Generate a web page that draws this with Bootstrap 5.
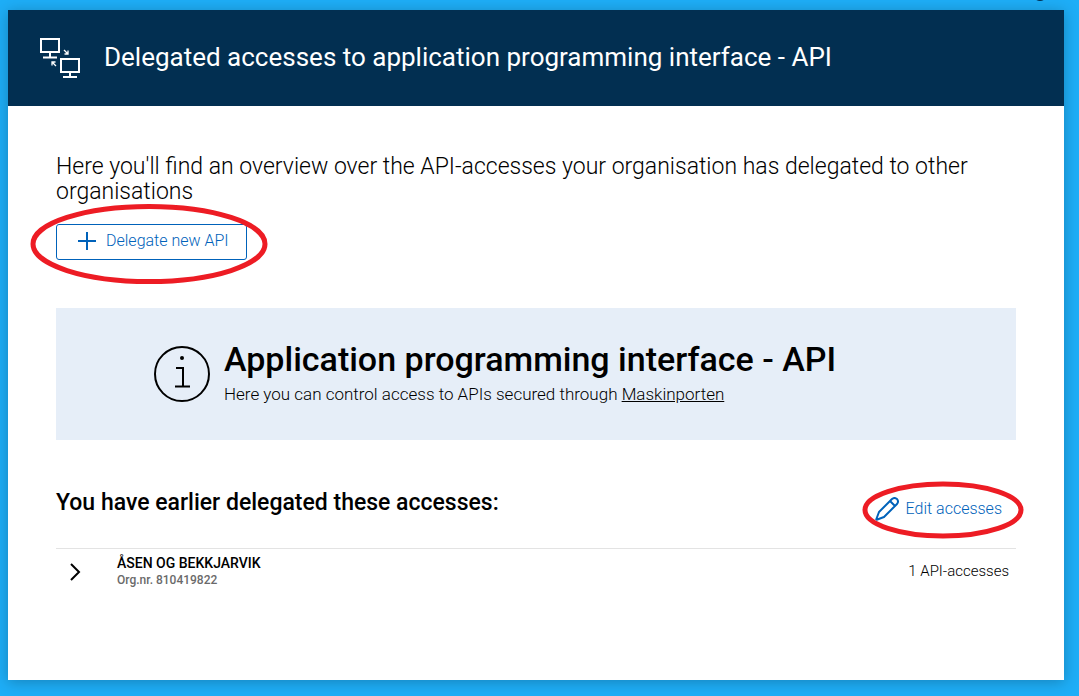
<!DOCTYPE html>
<html lang="en">
<head>
<meta charset="utf-8">
<meta name="viewport" content="width=device-width, initial-scale=1">
<title>Delegated accesses - API</title>
<link href="https://cdn.jsdelivr.net/npm/bootstrap@5.3.0/dist/css/bootstrap.min.css" rel="stylesheet">
<style>
body { background: #1eaef7; font-family: Roboto, "Liberation Sans", sans-serif; color: #000; padding: 10px 15px 16px 8px; min-height: 100vh; position: relative; }
.avatar-edge { position: absolute; top: -13px; right: 32px; width: 14px; height: 14px; border-radius: 50%; background: #022f51; }
.panel { background: #fff; box-shadow: 0 2px 14px rgba(0,0,0,.25); }
.panel-head { background: #022f51; color: #fff; padding: 28px 32px; gap: 24px; }
.panel-head h1 { font-size: 26px; line-height: 32px; font-weight: 400; padding-bottom: 2px; }
.panel-body { padding: 48px; }
.intro { font-size: 23px; line-height: 25px; font-weight: 300; margin-bottom: 20px; }
.blue-btn { color: #0062ba; font-size: 16px; line-height: 20px; font-weight: 300; position: relative; }
.btn-new { border: 1px solid #0062ba; border-radius: 3px; padding: 0 17px 2px 20px; height: 36px; gap: 9px; background: #fff; }
.btn-edit { border: 0; background: none; padding: 0; gap: 7px; margin: 8px 14px 0 0; height: 24px; }
.ring { position: absolute; pointer-events: none; overflow: visible; }
.ring-new { left: -27px; top: -22px; }
.ring-edit { left: -13px; top: -17px; }
.info-box { background: #e6eef8; margin-top: 48px; padding: 32px 98px 30px; gap: 14px; }
.info-box h2 { font-size: 34px; line-height: 38px; font-weight: 500; }
.info-box p { font-size: 17px; line-height: 32px; font-weight: 300; }
.info-box a { color: inherit; }
.list-head { margin-top: 49px; height: 59px; }
.list-head h3 { font-size: 23px; line-height: 28px; font-weight: 500; }
.org-row { border-top: 1px solid #e3e3e3; padding: 5px 7px 0 13px; gap: 35px; }
.org-name { font-size: 14px; line-height: 18px; font-weight: 500; }
.org-nr { font-size: 12px; line-height: 16px; font-weight: 500; color: #6a6a6a; }
.org-count { font-size: 15px; line-height: 20px; font-weight: 300; }
.chev { border: 0; background: none; padding: 0; width: 13px; }
</style>
<script src="https://cdn.jsdelivr.net/npm/bootstrap@5.3.0/dist/js/bootstrap.bundle.min.js"></script>
</head>
<body class="d-flex flex-column overflow-hidden">
<span class="avatar-edge"></span>
<main class="panel flex-grow-1">
  <header class="panel-head d-flex align-items-center">
    <svg width="40" height="40" viewBox="0 0 40 40" fill="none" stroke="#fff" stroke-width="2" aria-hidden="true">
      <path d="M1 1H19V14H1ZM10 14V19M3 19.500H17M21 21H39V34H21ZM30 34V39M23 39H37"/>
      <path d="M24 12L27.500 15.500M24.500 16H28V12.500M16 28L12.500 24.500M12 27.500V24H15.500" stroke-width="1.300"/>
    </svg>
    <h1 class="m-0">Delegated accesses to application programming interface - API</h1>
  </header>
  <div class="panel-body">
    <p class="intro">Here you'll find an overview over the API-accesses your organisation has delegated to other organisations</p>
    <button type="button" class="blue-btn btn-new d-inline-flex align-items-center">
      <svg width="20" height="20" viewBox="0 0 20 20" stroke="#0062ba" stroke-width="2" aria-hidden="true"><path d="M10 1V19M1 10H19"/></svg>
      <span>Delegate new API</span>
      <svg class="ring ring-new" width="240" height="82" viewBox="0 0 240 82" fill="none" stroke="#ed1c24" stroke-width="5" aria-hidden="true"><ellipse cx="119" cy="41" rx="116" ry="37.500"/></svg>
    </button>
    <section class="info-box d-flex">
      <svg class="flex-shrink-0 mt-1" width="56" height="60" viewBox="0 0 56 60" fill="none" stroke="#000" stroke-width="2" aria-hidden="true"><circle cx="28" cy="30" r="27"/><path d="M22 24H29V42M21 42.500H36"/><circle cx="28" cy="14" r="2" fill="#000" stroke="none"/></svg>
      <div>
        <h2 class="m-0">Application programming interface - API</h2>
        <p class="m-0">Here you can control access to APIs secured through <a href="#">Maskinporten</a></p>
      </div>
    </section>
    <div class="list-head d-flex justify-content-between align-items-start">
      <h3 class="m-0">You have earlier delegated these accesses:</h3>
      <button type="button" class="blue-btn btn-edit d-inline-flex align-items-center">
        <svg width="24" height="24" viewBox="0 0 24 24" fill="none" stroke="#0062ba" stroke-width="2" stroke-linejoin="round" aria-hidden="true"><path d="M1 23L4 15L17 2Q19.500 0 22 2Q24 4.500 22 7L9 20L1 23M15 4L20 9"/></svg>
        <span>Edit accesses</span>
        <svg class="ring ring-edit" width="162" height="60" viewBox="0 0 162 60" fill="none" stroke="#ed1c24" stroke-width="5" aria-hidden="true"><ellipse cx="81" cy="30" rx="78" ry="26"/></svg>
      </button>
    </div>
    <div class="org-row d-flex align-items-center">
      <button type="button" class="chev" aria-label="Expand"><svg width="13" height="20" viewBox="0 0 13 20" fill="none" stroke="#000" stroke-width="2" aria-hidden="true"><path d="M2 2L10 10L2 18"/></svg></button>
      <div class="flex-grow-1">
        <div class="org-name">ÅSEN OG BEKKJARVIK</div>
        <div class="org-nr">Org.nr. 810419822</div>
      </div>
      <div class="org-count">1 API-accesses</div>
    </div>
  </div>
</main>
</body>
</html>
